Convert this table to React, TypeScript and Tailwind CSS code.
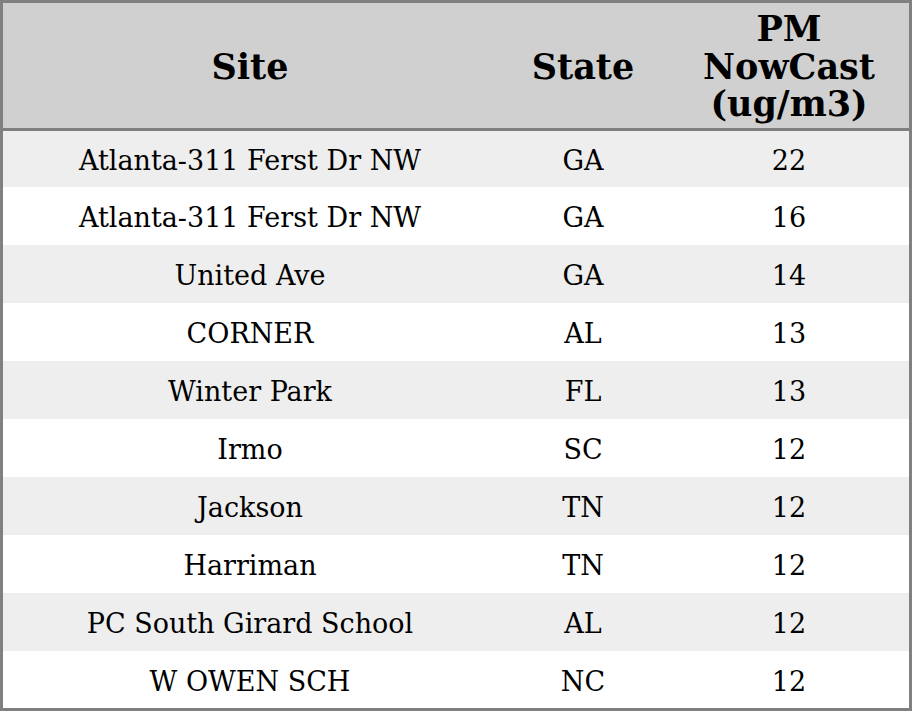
import React from "react";

const rows: [string, string, string][] = [
  ["Atlanta-311 Ferst Dr NW", "GA", "22"],
  ["Atlanta-311 Ferst Dr NW", "GA", "16"],
  ["United Ave", "GA", "14"],
  ["CORNER", "AL", "13"],
  ["Winter Park", "FL", "13"],
  ["Irmo", "SC", "12"],
  ["Jackson", "TN", "12"],
  ["Harriman", "TN", "12"],
  ["PC South Girard School", "AL", "12"],
  ["W OWEN SCH", "NC", "12"],
];

export default function App() {
  return (
    <div className="w-[912px] h-[711px] bg-white" style={{ fontFamily: '"DejaVu Serif", serif' }}>
      <div className="w-[912px] h-[711px] border-[3px] border-[#808080] flex flex-col text-black">
        <div className="h-[128px] shrink-0 pt-[2px] bg-[#d0d0d0] border-b-[3px] border-[#808080] grid grid-cols-[494px_172px_240px] items-center text-center font-bold text-[35px] leading-[37.5px]">
          <div>Site</div>
          <div>State</div>
          <div>
            PM
            <br />
            NowCast
            <br />
            (ug/m3)
          </div>
        </div>
        {rows.map((r, i) => (
          <div
            key={i}
            className={`grid grid-cols-[494px_172px_240px] items-center text-center text-[27px] leading-[32px] pt-[4px] ${
              i === 0 ? "h-[56px]" : i === 9 ? "h-[57px]" : "h-[58px]"
            } ${i % 2 === 0 ? "bg-[#eeeeee]" : "bg-white"}`}
          >
            <div>{r[0]}</div>
            <div>{r[1]}</div>
            <div>{r[2]}</div>
          </div>
        ))}
      </div>
    </div>
  );
}
